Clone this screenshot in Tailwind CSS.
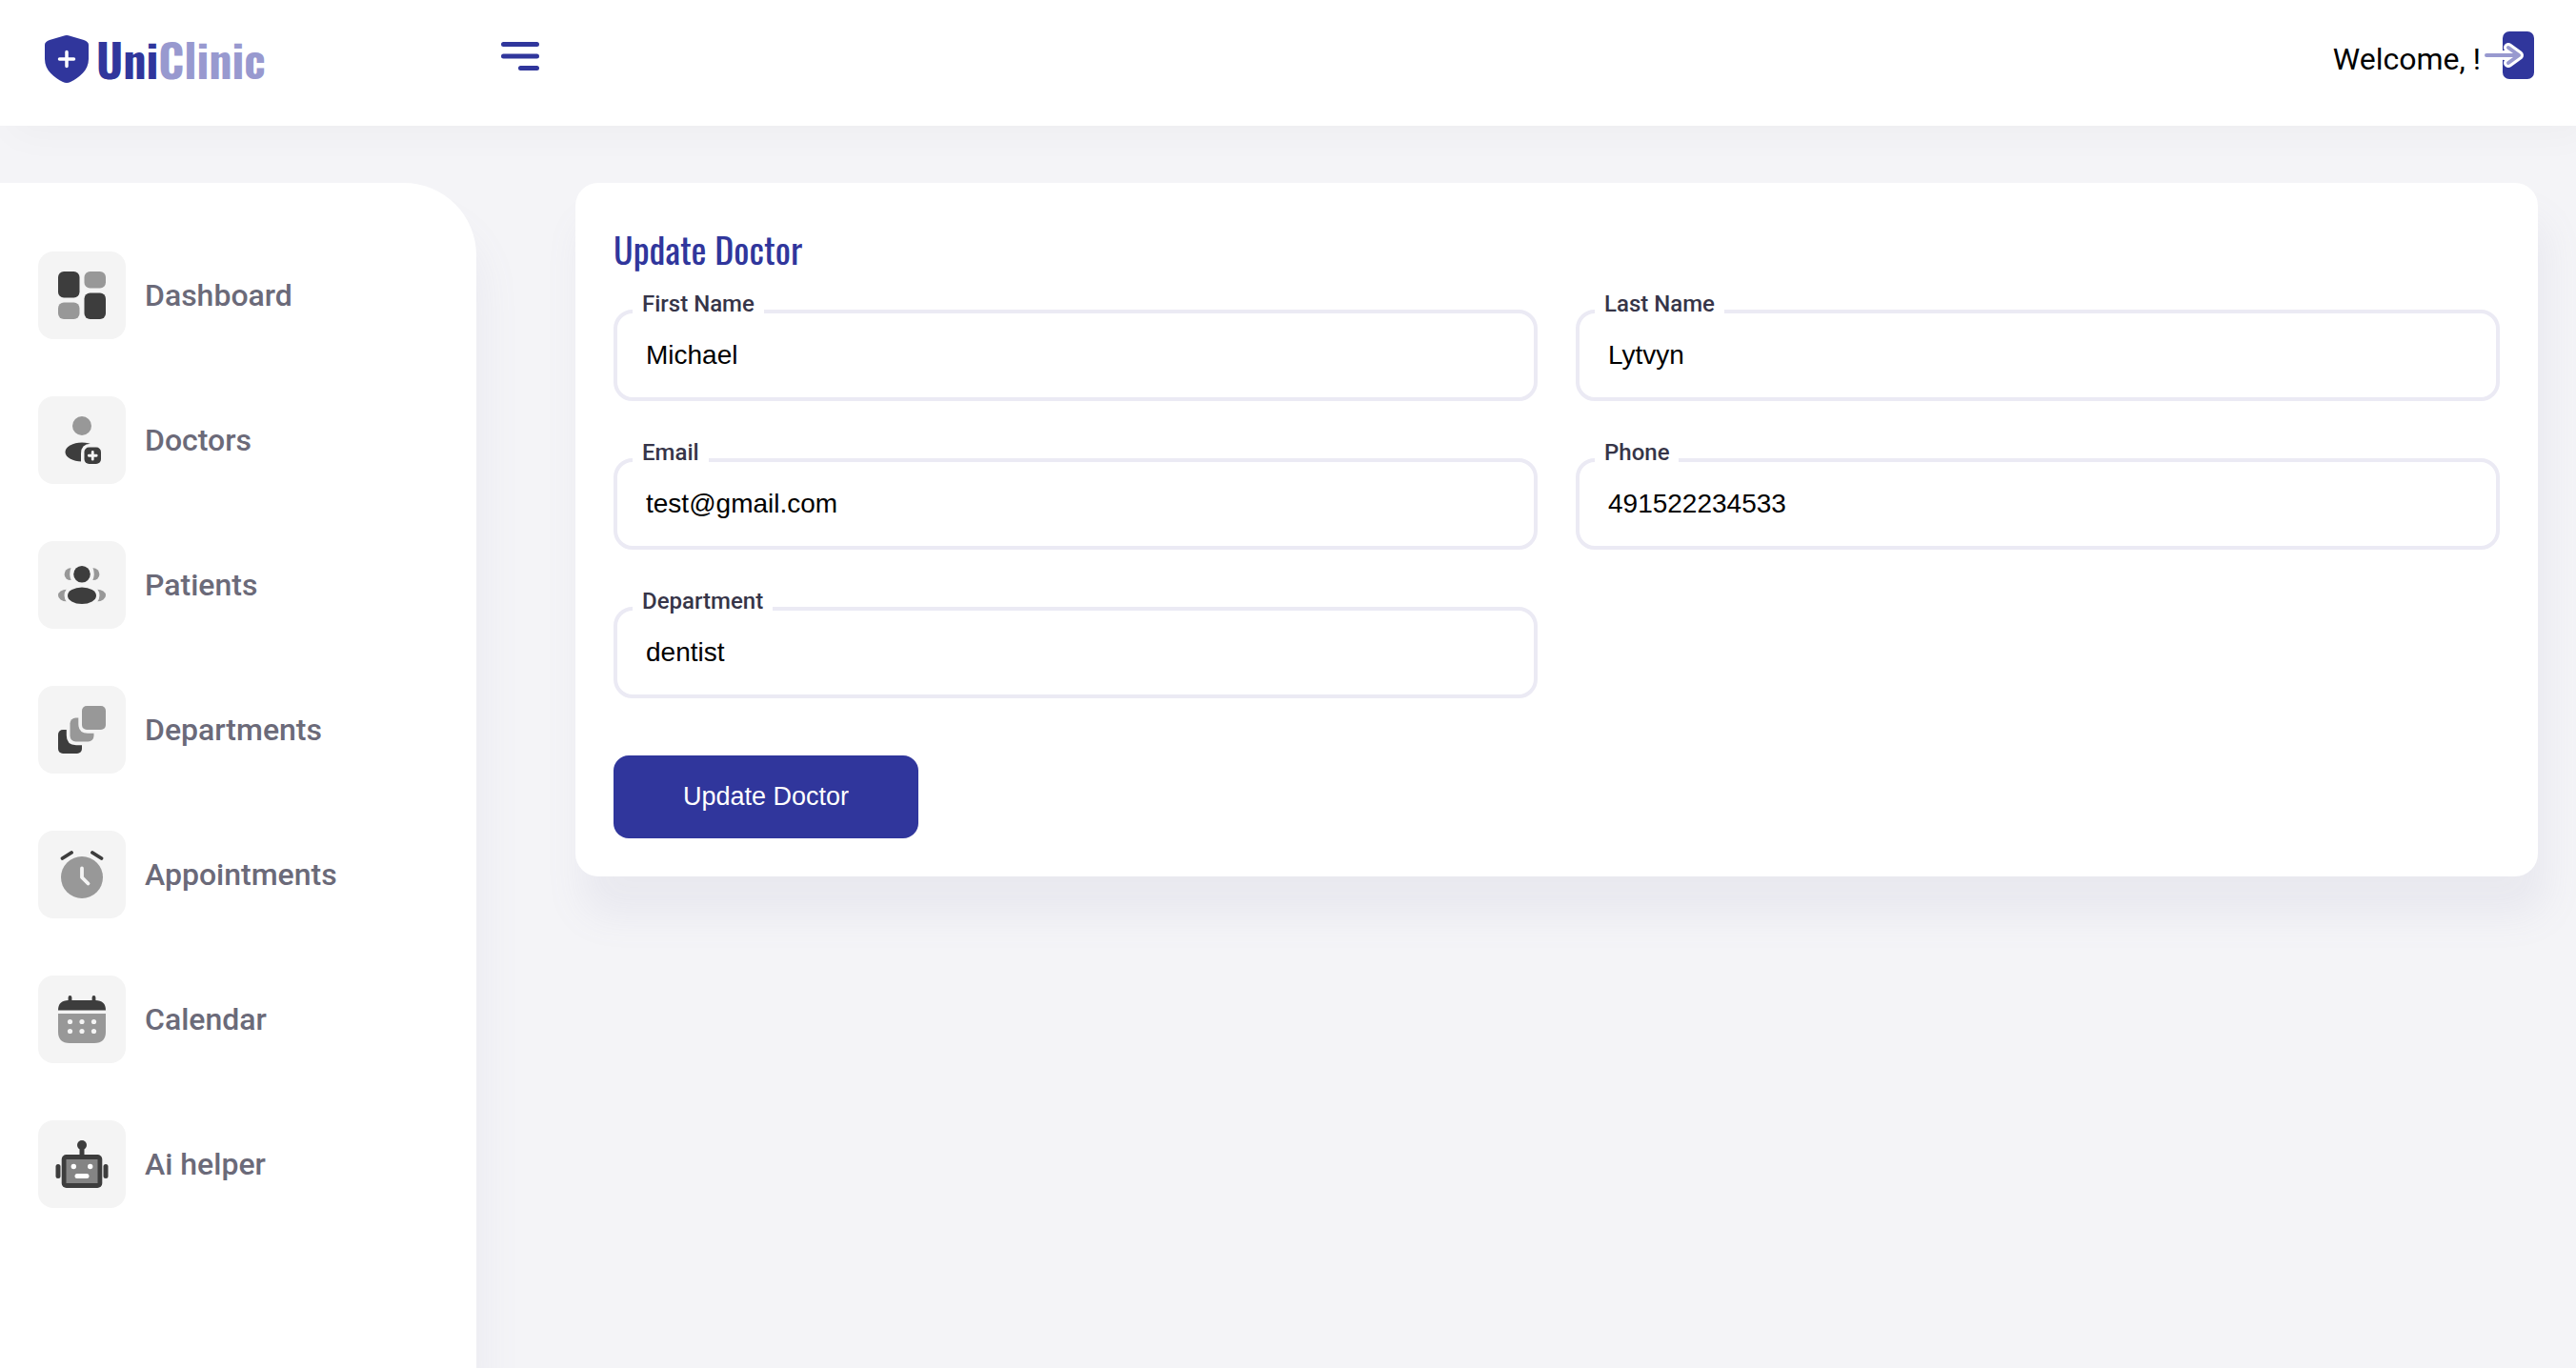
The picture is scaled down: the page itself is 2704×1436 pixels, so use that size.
<!DOCTYPE html>
<html lang="en">
<head>
<meta charset="utf-8">
<title>UniClinic – Update Doctor</title>
<meta name="viewport" content="width=device-width, initial-scale=1">
<script src="https://cdn.jsdelivr.net/npm/@tailwindcss/browser@4"></script>
</head>
<body class="flex min-h-screen flex-col bg-[#f4f4f7] font-['Roboto',sans-serif] text-black">

<header class="relative flex h-[132px] items-start justify-between bg-white pr-11 pl-[47px] shadow-[12px_8px_40px_rgba(0,0,0,0.03)]">
  <div class="flex items-start">
    <a href="#" class="flex h-[124px] w-[479px] items-center gap-2">
      <svg class="h-[50px] w-[46px]" viewBox="0 0 46 50" aria-hidden="true">
        <path fill="#30369c" d="M19.500 .8Q23-.7 26.500 .8L41 5Q46 6.800 46 10V25C46 37 36 44.500 27 49Q23 50.800 19 49C10 44.500 0 37 0 25V10Q0 6.800 5 5Z"/>
        <path d="M23 17.500V32.500M15.500 25H30.500" stroke="#fff" stroke-width="3.500" stroke-linecap="round"/>
      </svg>
      <span class="font-['Impact','Oswald','Liberation_Sans_Narrow',sans-serif] text-[48px] leading-[50px] font-bold text-[#30369c]">Uni<span class="text-[#9899cf]">Clinic</span></span>
    </a>
    <button type="button" aria-label="Toggle menu" class="mt-11">
      <svg class="h-[30px] w-10" viewBox="0 0 40 30" stroke="#30369c" stroke-width="5" stroke-linecap="round" aria-hidden="true">
        <path d="M2.500 2.500H37.500M2.500 15H37.500M20.500 27.500H37.500"/>
      </svg>
    </button>
  </div>
  <div class="flex items-start gap-1">
    <p class="mt-10 text-[32px] leading-[44px]">Welcome, !</p>
    <a href="#" aria-label="Log out" class="mt-[33px]">
      <svg class="h-[50px] w-[52px]" viewBox="0 0 52 50" fill="none" stroke-linecap="round" stroke-linejoin="round" aria-hidden="true">
        <rect x="19" width="33" height="50" rx="7" fill="#30369c"/>
        <path d="M25 17L36 25L25 33" stroke="#fff" stroke-width="10"/>
        <path d="M20 25H33" stroke="#fff" stroke-width="10"/>
        <path d="M2 25H35M25 17L36 25L25 33" stroke="#9899cf" stroke-width="4"/>
      </svg>
    </a>
  </div>
</header>

<div class="flex grow pt-[60px]">
  <nav aria-label="Main" class="w-[500px] shrink-0 rounded-tr-[76px] bg-white px-10 pt-[72px] pb-10 shadow-[8px_40px_40px_rgba(135,135,175,0.08)]">
    <ul class="flex flex-col gap-[60px] text-[32px] leading-10 font-medium text-[#6b6a79]">
      <li><a href="#" class="flex items-center gap-5">
        <span class="flex size-[92px] items-center justify-center rounded-2xl bg-[#f4f4f4]">
          <svg class="size-[50px]" viewBox="0 0 50 50" aria-hidden="true">
            <g fill="#3d3d3d"><rect width="22.500" height="27.500" rx="6"/><rect x="27.500" y="22.500" width="22.500" height="27.500" rx="6"/></g>
            <g fill="#989898"><rect x="27.500" width="22.500" height="17.500" rx="6"/><rect y="32.500" width="22.500" height="17.500" rx="6"/></g>
          </svg>
        </span>Dashboard</a></li>
      <li><a href="#" class="flex items-center gap-5">
        <span class="flex size-[92px] items-center justify-center rounded-2xl bg-[#f4f4f4]">
          <svg class="size-[50px]" viewBox="0 0 50 50" aria-hidden="true">
            <circle cx="25" cy="10" r="10" fill="#989898"/>
            <ellipse cx="25" cy="37.500" rx="17.500" ry="10" fill="#3d3d3d"/>
            <path d="M24 52V39Q24 29 34 28.700H48V52Z" fill="#f4f4f4"/>
            <rect x="27.500" y="32.500" width="17.500" height="17.500" rx="5" fill="#3d3d3d"/>
            <path d="M36.250 37.300V45.200M32.300 41.250H40.200" stroke="#f4f4f4" stroke-width="2.800" stroke-linecap="round"/>
          </svg>
        </span>Doctors</a></li>
      <li><a href="#" class="flex items-center gap-5">
        <span class="flex size-[92px] items-center justify-center rounded-2xl bg-[#f4f4f4]">
          <svg class="size-[50px]" viewBox="0 0 50 50" aria-hidden="true">
            <g fill="#989898"><circle cx="13" cy="13.700" r="6.400"/><circle cx="37" cy="13.700" r="6.400"/><ellipse cx="9" cy="36" rx="9" ry="6.300"/><ellipse cx="41" cy="36" rx="9" ry="6.300"/></g>
            <path d="M14 6Q10.500 13.700 14 21H36Q39.500 13.700 36 6ZM9 29Q4 36 9 43H41Q46 36 41 29Z" fill="#f4f4f4"/>
            <circle cx="25" cy="13.700" r="8.800" fill="#3d3d3d"/><ellipse cx="25" cy="36.200" rx="15" ry="8.800" fill="#3d3d3d"/>
          </svg>
        </span>Patients</a></li>
      <li><a href="#" class="flex items-center gap-5">
        <span class="flex size-[92px] items-center justify-center rounded-2xl bg-[#f4f4f4]">
          <svg class="size-[50px]" viewBox="0 0 50 50" aria-hidden="true">
            <rect y="25" width="25" height="25" rx="5" fill="#3d3d3d"/>
            <path d="M8.800 20V31Q8.800 41.200 19 41.200H30V20Z" fill="#f4f4f4"/>
            <rect x="12.500" y="12.500" width="25" height="25" rx="6" fill="#989898"/>
            <path d="M21.300 8V19Q21.300 28.700 31 28.700H42V8Z" fill="#f4f4f4"/>
            <rect x="25" width="25" height="25" rx="5" fill="#989898"/>
          </svg>
        </span>Departments</a></li>
      <li><a href="#" class="flex items-center gap-5">
        <span class="flex size-[92px] items-center justify-center rounded-2xl bg-[#f4f4f4]">
          <svg class="size-[50px]" viewBox="0 0 50 50" fill="none" stroke-linecap="round" stroke-linejoin="round" aria-hidden="true">
            <circle cx="25" cy="28" r="22" fill="#989898"/>
            <path d="M25 18.500V28L31.500 34.500" stroke="#f4f4f4" stroke-width="3.800"/>
            <path d="M4.500 8L14 2M45.500 8L36 2" stroke="#3d3d3d" stroke-width="3.800"/>
          </svg>
        </span>Appointments</a></li>
      <li><a href="#" class="flex items-center gap-5">
        <span class="flex size-[92px] items-center justify-center rounded-2xl bg-[#f4f4f4]">
          <svg class="size-[50px]" viewBox="0 0 50 50" aria-hidden="true">
            <path d="M12.500 2V9M37.500 2V9" stroke="#3d3d3d" stroke-width="3.800" stroke-linecap="round"/>
            <path d="M0 15.500Q0 5 11 5H39Q50 5 50 15.500Z" fill="#3d3d3d"/>
            <path d="M0 19H50V38Q50 50 38 50H12Q0 50 0 38Z" fill="#989898"/>
            <g fill="#f4f4f4"><circle cx="12.500" cy="27.500" r="2.600"/><circle cx="25" cy="27.500" r="2.600"/><circle cx="37.500" cy="27.500" r="2.600"/><circle cx="12.500" cy="37.500" r="2.600"/><circle cx="25" cy="37.500" r="2.600"/><circle cx="37.500" cy="37.500" r="2.600"/></g>
          </svg>
        </span>Calendar</a></li>
      <li><a href="#" class="flex items-center gap-5">
        <span class="flex size-[92px] items-center justify-center rounded-2xl bg-[#f4f4f4]">
          <svg class="size-[50px] overflow-visible" viewBox="0 0 50 50" aria-hidden="true">
            <g fill="#3d3d3d"><circle cx="25" cy="5" r="5"/><rect x="22.500" y="5" width="5" height="12"/><rect x="3.700" y="15" width="42.600" height="35" rx="5"/><rect x="-2.500" y="25" width="5" height="15" rx="2.500"/><rect x="47.500" y="25" width="5" height="15" rx="2.500"/></g>
            <rect x="8.500" y="20" width="33" height="25" fill="#848484"/>
            <g fill="#fff"><circle cx="16.300" cy="27.500" r="2.700"/><circle cx="33.700" cy="27.500" r="2.700"/><rect x="17.500" y="35" width="15" height="5" rx="2.500"/></g>
          </svg>
        </span>Ai helper</a></li>
    </ul>
  </nav>

  <main class="grow pr-10 pb-10 pl-[104px]">
    <form class="rounded-3xl bg-white p-10 shadow-[8px_40px_40px_rgba(135,135,175,0.10)]">
      <h1 class="mb-[35px] font-['Oswald','Liberation_Sans_Narrow',sans-serif] text-[38px] leading-[58px] text-[#30369c]">Update Doctor</h1>
      <div class="grid grid-cols-2 gap-x-10 gap-y-[60px]">
        <div class="relative">
          <label for="first" class="absolute -top-5 left-5 bg-white px-[10px] text-2xl leading-7 font-medium text-[#363548]">First Name</label>
          <input id="first" type="text" value="Michael" class="block h-24 w-full rounded-[20px] border-4 border-[#ebeaf4] px-[30px] font-['Liberation_Sans',sans-serif] text-[28px]">
        </div>
        <div class="relative">
          <label for="last" class="absolute -top-5 left-5 bg-white px-[10px] text-2xl leading-7 font-medium text-[#363548]">Last Name</label>
          <input id="last" type="text" value="Lytvyn" class="block h-24 w-full rounded-[20px] border-4 border-[#ebeaf4] px-[30px] font-['Liberation_Sans',sans-serif] text-[28px]">
        </div>
        <div class="relative">
          <label for="email" class="absolute -top-5 left-5 bg-white px-[10px] text-2xl leading-7 font-medium text-[#363548]">Email</label>
          <input id="email" type="email" value="test@gmail.com" class="block h-24 w-full rounded-[20px] border-4 border-[#ebeaf4] px-[30px] font-['Liberation_Sans',sans-serif] text-[28px]">
        </div>
        <div class="relative">
          <label for="phone" class="absolute -top-5 left-5 bg-white px-[10px] text-2xl leading-7 font-medium text-[#363548]">Phone</label>
          <input id="phone" type="tel" value="491522234533" class="block h-24 w-full rounded-[20px] border-4 border-[#ebeaf4] px-[30px] font-['Liberation_Sans',sans-serif] text-[28px]">
        </div>
        <div class="relative">
          <label for="department" class="absolute -top-5 left-5 bg-white px-[10px] text-2xl leading-7 font-medium text-[#363548]">Department</label>
          <input id="department" type="text" value="dentist" class="block h-24 w-full rounded-[20px] border-4 border-[#ebeaf4] px-[30px] font-['Liberation_Sans',sans-serif] text-[28px]">
        </div>
      </div>
      <button type="submit" class="mt-[60px] block h-[87px] w-80 rounded-2xl bg-[#30369c] font-['Liberation_Sans',sans-serif] text-[27px] text-white">Update Doctor</button>
    </form>
  </main>
</div>
</body>
</html>
